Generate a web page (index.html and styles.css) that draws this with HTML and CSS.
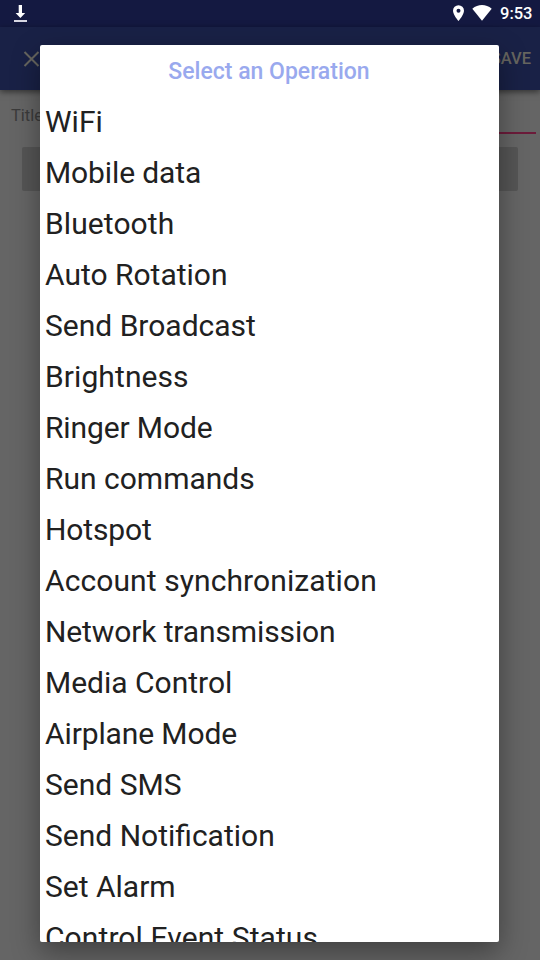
FILE: index.html
```html
<!DOCTYPE html>
<html lang="en">
<head>
<meta charset="utf-8">
<title>Select an Operation</title>
<link rel="stylesheet" href="styles.css">
</head>
<body>
<div class="screen">
  <header class="status">
    <svg class="download" width="14" height="18" viewBox="0 0 14 18"><path d="M4.700 0h3.300v8H11.200l-4.800 5-4.800-5h3.100z" fill="#fff"/><path d="M0 15h13v2H0z" fill="#d8d8e4"/></svg>
    <div class="indicators">
      <svg width="12" height="17" viewBox="0 0 12 17"><path fill="#fff" fill-rule="evenodd" d="M5.500.2A5.500 5.500 0 0 0 0 5.700C0 9.800 5.500 16 5.500 16s5.500-6.200 5.500-10.300A5.500 5.500 0 0 0 5.500.2zM5.500 3.700a2 2 0 1 1 0 4 2 2 0 0 1 0-4z"/></svg>
      <svg class="wifi" width="20" height="16" viewBox="0 0 20 16"><path fill="#fff" d="M.3 3.700C6-1.200 14-1.200 19.700 3.700L10 15.800z"/></svg>
      <span class="clock">9:53</span>
    </div>
  </header>
  <div class="toolbar">
    <svg width="17" height="16" viewBox="0 0 17 16"><path d="M1.500 1l14 14M15.500 1l-14 14" stroke="#66655f" stroke-width="2"/></svg>
    <span class="save">SAVE</span>
  </div>
  <main class="form">
    <div class="field"><span class="label">Title</span><span class="input"></span></div>
    <div class="button"></div>
  </main>
  <section class="dialog">
    <h1 class="heading">Select an Operation</h1>
    <ul class="list">
      <li>WiFi</li>
      <li class="tight">Mobile data</li>
      <li class="loose">Bluetooth</li>
      <li>Auto Rotation</li>
      <li>Send Broadcast</li>
      <li class="loose">Brightness</li>
      <li class="tight">Ringer Mode</li>
      <li>Run commands</li>
      <li class="tight">Hotspot</li>
      <li class="loose">Account synchronization</li>
      <li class="tight">Network transmission</li>
      <li>Media Control</li>
      <li class="tight">Airplane Mode</li>
      <li>Send SMS</li>
      <li>Send Notification</li>
      <li>Set Alarm</li>
      <li class="loose">Control Event Status</li>
    </ul>
  </section>
</div>
</body>
</html>
```
FILE: styles.css
```css
* { box-sizing: border-box; }
body { margin: 0; font-family: Roboto, "Liberation Sans", sans-serif; }
.screen {
  position: relative;
  display: flex;
  flex-direction: column;
  width: 540px;
  height: 960px;
  overflow: hidden;
  background: #656565;
}
.status {
  display: flex;
  justify-content: space-between;
  height: 27px;
  padding: 5px 9px 0 14px;
  background: #141941;
}
.indicators { display: flex; color: #fff; }
.wifi { margin-left: 7px; }
.clock {
  width: 31px;
  margin-left: 8px;
  font-size: 16.500px;
  font-weight: 500;
  line-height: 18px;
  white-space: nowrap;
}
.toolbar {
  display: flex;
  align-items: center;
  justify-content: space-between;
  height: 63px;
  padding: 0 9px 0 23px;
  background: #192146;
  box-shadow: 0 2px 6px rgba(0, 0, 0, .5);
}
.save { color: #66655f; font-size: 16.500px; font-weight: 500; }
.form { padding: 14px 4px 0 11px; }
.field { display: flex; height: 30px; }
.label { width: 45px; color: #3b3b3b; font-size: 16.500px; line-height: 24px; }
.input { flex: 1; border-bottom: 2px solid #6c1b3a; }
.button {
  height: 44px;
  margin: 13px 18px 0 11px;
  border-radius: 2px;
  background: #555;
}
.dialog {
  position: absolute;
  top: 45px;
  left: 40px;
  width: 459px;
  height: 897px;
  overflow: hidden;
  border-radius: 2px;
  background: #fff;
  box-shadow: 0 10px 28px rgba(0, 0, 0, .38);
}
.heading {
  height: 52px;
  margin: 0;
  padding-right: 1px;
  color: #99a9ee;
  font-size: 23px;
  font-weight: 500;
  line-height: 54px;
  text-align: center;
}
.list { margin: 0; padding: 0 5px; list-style: none; }
.list li {
  height: 51px;
  color: #212121;
  font-size: 30px;
  line-height: 50px;
  white-space: nowrap;
}
.list .tight { letter-spacing: -.12px; }
.list .loose { letter-spacing: .09px; }
```
